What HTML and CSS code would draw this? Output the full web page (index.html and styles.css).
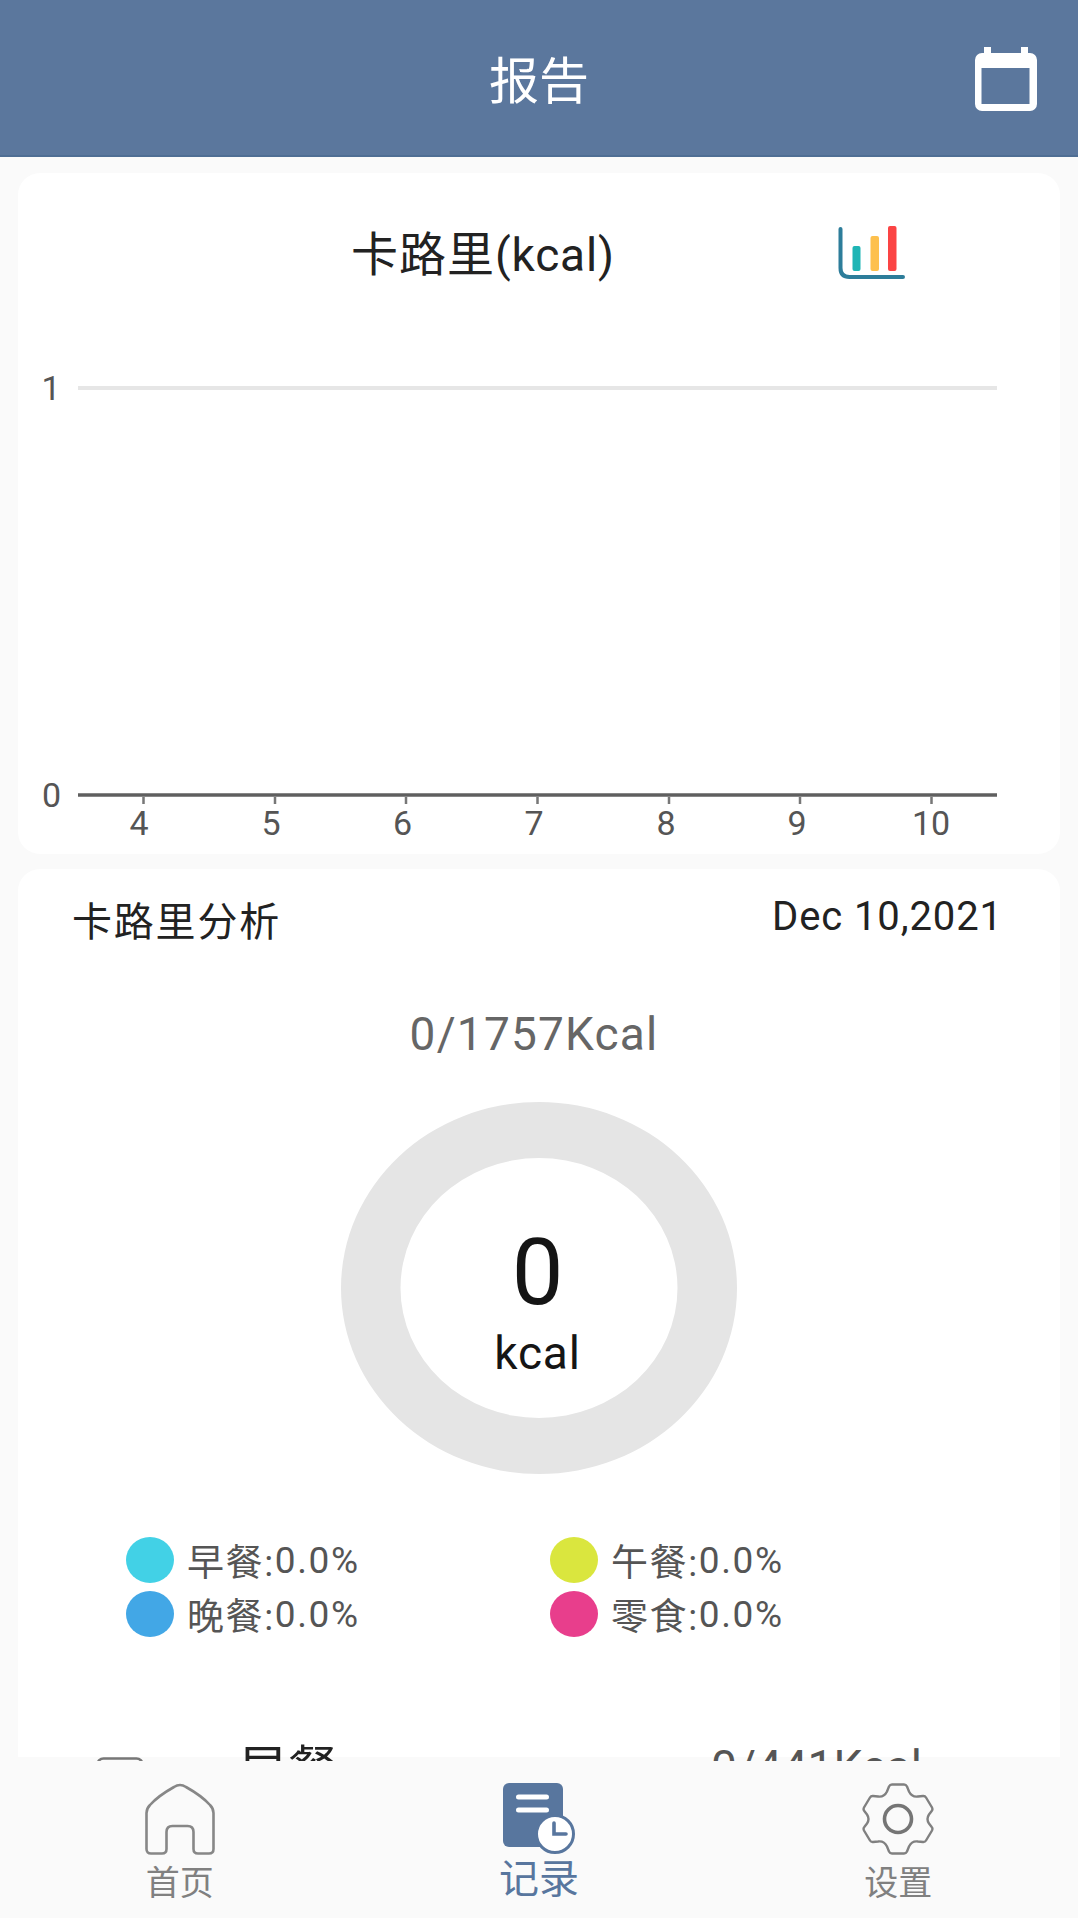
FILE: index.html
```html
<!DOCTYPE html>
<html lang="zh-CN">
<head>
    <meta charset="UTF-8">
    <meta name="viewport" content="width=device-width, initial-scale=1.0">
    <title>报告</title>
    <link rel="stylesheet" href="styles.css">
</head>
<body>
    <header class="topbar">
        <h1>报告</h1>
        <svg class="calendar-icon" viewBox="0 0 62 64">
            <path fill="#fff" fill-rule="evenodd" d="M9 0h7v6h30V0h7v6h2a7 7 0 0 1 7 7v44a7 7 0 0 1-7 7H7a7 7 0 0 1-7-7V13a7 7 0 0 1 7-7h2zM6.500 21v36h48V21z"/>
        </svg>
    </header>

    <main class="content">
        <section class="card chart-card">
            <div class="chart-header">
                <h2><span class="cjk">卡路里</span>(kcal)</h2>
                <svg class="bars-icon" viewBox="0 0 68 54">
                    <path d="M2.500 3v39q0 9 9 9H65" fill="none" stroke="#2d7d9a" stroke-width="4" stroke-linecap="round"/>
                    <rect x="14.500" y="20" width="8" height="25" rx="2" fill="#1fb5b5"/>
                    <rect x="32.500" y="10" width="8.500" height="35" rx="2" fill="#fdc04d"/>
                    <rect x="50" y="0" width="8.500" height="45" rx="2" fill="#fb4444"/>
                </svg>
            </div>
            <svg class="chart" viewBox="0 0 1042 520">
                <line x1="60" y1="54" x2="979" y2="54" stroke="#e6e6e6" stroke-width="4"/>
                <line x1="60" y1="461" x2="979" y2="461" stroke="#5f5f5f" stroke-width="3.500"/>
                <path d="M125.500 463v7M257 463v7M388 463v7M519.500 463v7M651 463v7M782 463v7M913.500 463v7" stroke="#777" stroke-width="2.500"/>
                <g class="axis-text">
                    <text x="33" y="66">1</text>
                    <text x="33.500" y="473">0</text>
                    <text x="121" y="501">4</text>
                    <text x="253" y="501">5</text>
                    <text x="384.500" y="501">6</text>
                    <text x="516" y="501">7</text>
                    <text x="648" y="501">8</text>
                    <text x="779" y="501">9</text>
                    <text x="913" y="501">10</text>
                </g>
            </svg>
        </section>

        <section class="card analysis-card">
            <div class="analysis-header">
                <h3>卡路里分析</h3>
                <span class="date">Dec 10,2021</span>
            </div>
            <p class="total">0/1757Kcal</p>
            <div class="ring">
                <svg viewBox="0 0 396 372">
                    <path fill="#e5e5e5" fill-rule="evenodd" d="M0 186a198 186 0 1 0 396 0a198 186 0 1 0-396 0zM59.500 186a138.500 130 0 1 0 277 0a138.500 130 0 1 0-277 0z"/>
                    <text class="ring-value" x="196.500" y="202">0</text>
                    <text class="ring-unit" x="196.500" y="267">kcal</text>
                </svg>
            </div>
            <div class="legend">
                <div class="legend-item"><i class="dot breakfast"></i><span class="name">早餐:</span><span>0.0%</span></div>
                <div class="legend-item"><i class="dot lunch"></i><span class="name">午餐:</span><span>0.0%</span></div>
                <div class="legend-item"><i class="dot dinner"></i><span class="name">晚餐:</span><span>0.0%</span></div>
                <div class="legend-item"><i class="dot snack"></i><span class="name">零食:</span><span>0.0%</span></div>
            </div>
            <div class="meal">
                <svg class="meal-icon" viewBox="0 0 48 50">
                    <rect x="1.500" y="1.500" width="45" height="46" rx="6" fill="none" stroke="#777" stroke-width="2.500"/>
                </svg>
                <span class="meal-name">早餐</span>
                <span class="meal-value">0/441Kcal</span>
            </div>
        </section>
    </main>

    <nav class="tabbar">
        <a class="tab">
            <svg viewBox="0 0 72 72">
                <path d="M30 4q6-4 12 0Q58 13 66 22q3.500 3.500 3.500 8v36q0 4.500-4.500 4.500H54q-4.500 0-4.500-4.500V49q0-6-6-6h-15q-6 0-6 6v17q0 4.500-4.500 4.500H7q-4.500 0-4.500-4.500V30q0-4.500 3.500-8Q14 13 30 4z" fill="none" stroke="#878787" stroke-width="2.600"/>
            </svg>
            <span>首页</span>
        </a>
        <a class="tab active">
            <svg viewBox="0 0 72 72">
                <rect x="0" y="0" width="60" height="64" rx="6" fill="#58769e"/>
                <path d="M15.500 14h28M15.500 27h28" stroke="#fff" stroke-width="5" stroke-linecap="round"/>
                <circle cx="52" cy="51" r="18.500" fill="#fff" stroke="#58769e" stroke-width="3"/>
                <path d="M51 40v11h12" fill="none" stroke="#58769e" stroke-width="3.600" stroke-linecap="round"/>
            </svg>
            <span>记录</span>
        </a>
        <a class="tab">
            <svg viewBox="0 0 72 72">
                <path d="M30 1.500h12q2 0 3 2l2 5q3 6 9 5l5-.5q2-.2 3 1.500l6 10q1 2-.3 3.500l-2.700 3.500q-3 4.500 0 9l2.700 3.500q1.300 1.500.3 3.500l-6 10q-1 1.700-3 1.500l-5-.5q-6-1-9 5l-2 5q-1 2-3 2H30q-2 0-3-2l-2-5q-3-6-9-5l-5 .5q-2 .2-3-1.500l-6-10q-1-2 .3-3.500L5 40.500q3-4.500 0-9L2.300 28Q1 26.500 2 24.500l6-10q1-1.700 3-1.500l5 .5q6 1 9-5l2-5q1-2 3-2z" fill="none" stroke="#808080" stroke-width="2.400"/>
                <circle cx="36" cy="36" r="13.500" fill="none" stroke="#757575" stroke-width="3.600"/>
            </svg>
            <span>设置</span>
        </a>
    </nav>
</body>
</html>
```
FILE: styles.css
```css
* {
    box-sizing: border-box;
}
body {
    margin: 0;
    height: 1918px;
    display: flex;
    flex-direction: column;
    overflow: hidden;
    font-family: Roboto, "Noto Sans CJK SC", sans-serif;
    background-color: #fafafa;
    color: #222;
}
h1, h2, h3, p {
    margin: 0;
    font-weight: 400;
}
.topbar {
    flex: none;
    height: 157px;
    display: grid;
    grid-template-columns: 1fr auto 1fr;
    align-items: center;
    padding: 2px 41px 0;
    background-color: #5b779d;
    border-bottom: 2px solid #4f6e94;
}
.topbar h1 {
    grid-column: 2;
    font-size: 50px;
    line-height: 60px;
    padding-top: 7px;
    color: #fff;
}
.calendar-icon {
    width: 62px;
    height: 64px;
    justify-self: end;
}
.content {
    flex: 1;
    min-height: 0;
    overflow: hidden;
    padding: 16px 18px 0;
    display: flex;
    flex-direction: column;
    gap: 15px;
}
.card {
    flex: none;
    background-color: #fff;
    border-radius: 22px;
}
.chart-card {
    height: 681px;
}
.chart-header {
    height: 161px;
    display: flex;
    align-items: flex-start;
    padding: 50px 154px 0 333px;
    justify-content: space-between;
}
.chart-header h2 {
    font-size: 46px;
    line-height: 64px;
    letter-spacing: 0.8px;
}
.chart-header .cjk {
    font-size: 47px;
    letter-spacing: 1px;
}
.bars-icon {
    width: 68px;
    height: 54px;
    margin-top: 3px;
}
.chart {
    display: block;
    width: 1042px;
    height: 520px;
}
.axis-text {
    font-size: 34px;
    fill: #555;
    text-anchor: middle;
}
.analysis-card {
    height: 888px;
    border-radius: 22px 22px 0 0;
}
.analysis-header {
    display: flex;
    justify-content: space-between;
    padding: 24px 57px 0 54px;
}
.analysis-header h3 {
    font-size: 40px;
    line-height: 60px;
    letter-spacing: 1.8px;
}
.date {
    font-size: 40px;
    line-height: 48px;
    letter-spacing: 0.9px;
}
.total {
    margin-top: 49px;
    padding-right: 10px;
    text-align: center;
    font-size: 46px;
    line-height: 64px;
    letter-spacing: 1.2px;
    color: #666;
}
.ring {
    display: flex;
    justify-content: center;
    margin-top: 36px;
}
.ring svg {
    width: 396px;
    height: 372px;
}
.ring text {
    text-anchor: middle;
    fill: #151515;
}
.ring-value {
    font-size: 92px;
}
.ring-unit {
    font-size: 46px;
    letter-spacing: 0.8px;
}
.legend {
    display: grid;
    grid-template-columns: 424px 1fr;
    row-gap: 8px;
    padding: 63px 0 0 108px;
}
.legend-item {
    display: flex;
    align-items: center;
    height: 46px;
    font-size: 37px;
    letter-spacing: 1.6px;
    color: #555;
}
.dot {
    width: 48px;
    height: 46px;
    margin-right: 13px;
    border-radius: 50%;
}
.breakfast {
    background-color: #42d1e6;
}
.lunch {
    background-color: #dae63e;
}
.dinner {
    background-color: #42a7e6;
}
.snack {
    background-color: #e83e8c;
}
.meal {
    display: flex;
    align-items: flex-start;
    padding: 98px 138px 0 78px;
    line-height: 64px;
}
.meal-icon {
    width: 48px;
    height: 50px;
    margin-top: 22px;
}
.meal-name {
    margin-top: 3px;
    margin-left: 94px;
    font-size: 50px;
}
.meal-value {
    margin-left: auto;
    font-size: 46px;
    color: #555;
}
.tabbar {
    flex: none;
    height: 157px;
    display: flex;
    background-color: #fafafa;
}
.tab {
    flex: 1;
    display: flex;
    flex-direction: column;
    align-items: center;
    padding-top: 22px;
    font-size: 34px;
    color: #808080;
}
.tab svg {
    width: 72px;
    height: 72px;
}
.tab span {
    margin-top: 7px;
    line-height: 42px;
}
.active {
    color: #58769e;
}
.active span {
    margin-top: 4px;
    font-size: 40px;
}
```
